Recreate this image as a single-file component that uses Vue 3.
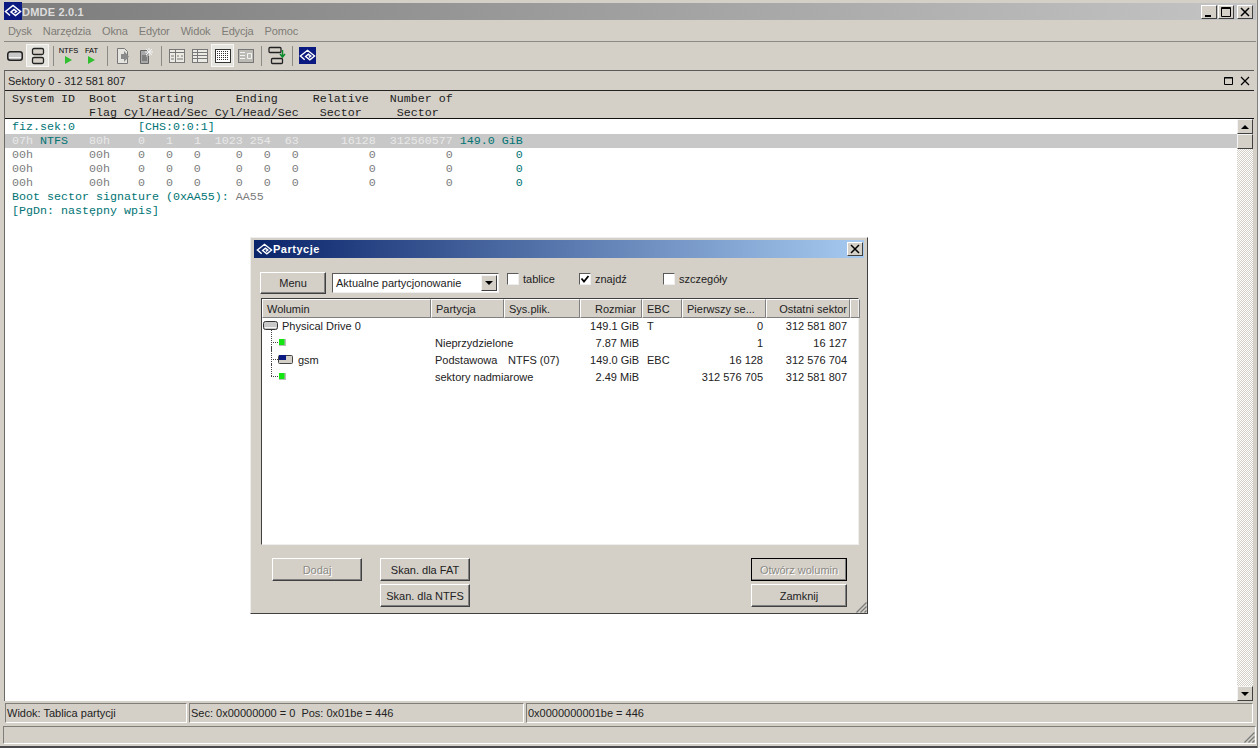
<script setup>
const menu = ['Dysk', 'Narzędzia', 'Okna', 'Edytor', 'Widok', 'Edycja', 'Pomoc']

const rows = [
  { id: 'disk', name: 'Physical Drive 0', part: '', fs: '', size: '149.1 GiB', ebc: 'T', first: '0', last: '312 581 807' },
  { id: 'free', name: '', part: 'Nieprzydzielone', fs: '', size: '7.87 MiB', ebc: '', first: '1', last: '16 127' },
  { id: 'vol', name: 'gsm', part: 'Podstawowa', fs: 'NTFS (07)', size: '149.0 GiB', ebc: 'EBC', first: '16 128', last: '312 576 704' },
  { id: 'end', name: '', part: 'sektory nadmiarowe', fs: '', size: '2.49 MiB', ebc: '', first: '312 576 705', last: '312 581 807' }
]

const emptyRows = [0, 1, 2]
</script>

<template>
  <div class="app">
    <div class="titlebar">
      <svg class="logo" viewBox="0 0 18 18">
        <rect width="18" height="18" fill="#0a1a80" />
        <path d="M6 13.500 1.500 9.500 9 3.500l7.500 6-5 4-4.500-3.500L10 7.500l2.500 2-2 1.500" fill="none" stroke="#fff" stroke-width="1.500" />
      </svg>
      <span class="app-title">DMDE 2.0.1</span>
      <div class="caption-btns">
        <button class="cap"><svg viewBox="0 0 14 12"><path d="M3 9h6v2H3z" fill="#000" /></svg></button>
        <button class="cap"><svg viewBox="0 0 14 12"><path d="M2.500 1.500h9v9h-9zM2 2.500h10" fill="none" stroke="#000" /></svg></button>
        <button class="cap cap-gap"><svg viewBox="0 0 14 12"><path d="m3 2 8 8m0-8-8 8" stroke="#000" stroke-width="1.500" /></svg></button>
      </div>
    </div>

    <div class="menubar">
      <span v-for="m in menu" :key="m" class="menu-item">{{ m }}</span>
    </div>

    <div class="toolbar">
      <span class="tool">
        <svg viewBox="0 0 16 12" width="16" height="12"><rect x=".75" y="1.750" width="14.500" height="8.500" rx="2.500" fill="#c8c8c8" stroke="#222" stroke-width="1.500" /><path d="M2 7.500h12" stroke="#f4f4f4" /></svg>
      </span>
      <span class="tool pressed">
        <svg viewBox="0 0 14 18" width="14" height="18"><rect x="1.500" y="1.500" width="11" height="6" rx="1.500" fill="#d4d0c8" stroke="#222" stroke-width="1.300" /><rect x="1.500" y="10.500" width="11" height="6" rx="1.500" fill="#d4d0c8" stroke="#222" stroke-width="1.300" /></svg>
      </span>
      <span class="sep"></span>
      <span class="tool tool-run"><b class="mini">NTFS</b><i class="play"></i></span>
      <span class="tool tool-run"><b class="mini">FAT</b><i class="play"></i></span>
      <span class="sep"></span>
      <span class="tool">
        <svg viewBox="0 0 16 18" width="16" height="18"><path d="M2.500 1.500h7l3 3v12h-10z" fill="#e6e4de" stroke="#777" /><path d="M6 7h3V4l5 5.500L9 15v-3H6z" fill="#8a8a8a" /></svg>
      </span>
      <span class="tool">
        <svg viewBox="0 0 16 18" width="16" height="18"><path d="M2.500 3.500h8v13h-8z" fill="#a8a8a8" stroke="#666" /><path d="M11 1v8M7 5h8M8 2l6 6M14 2 8 8" stroke="#f4f4f4" /><path d="M4 9h4M4 11h5M4 13h5" stroke="#555" /></svg>
      </span>
      <span class="sep"></span>
      <span class="tool">
        <svg viewBox="0 0 16 14" width="16" height="14"><rect x=".5" y=".5" width="15" height="13" fill="#eceae4" stroke="#777" /><path d="M1 3.500h14M6.500 1v12M2 7h3M2 10h3M8 7h2M12 7h2M8 10h6" stroke="#777" /></svg>
      </span>
      <span class="tool">
        <svg viewBox="0 0 16 14" width="16" height="14"><rect x=".5" y=".5" width="15" height="13" fill="#eceae4" stroke="#777" /><path d="M1 3.500h14M1 6.500h14M1 9.500h14M5.500 1v12" stroke="#777" /></svg>
      </span>
      <span class="tool pressed">
        <svg viewBox="0 0 16 14" width="16" height="14"><rect x=".5" y=".5" width="15" height="13" fill="#fff" stroke="#333" /><path d="M2 2.500h12M2 4.500h12M2 6.500h12M2 8.500h12M2 10.500h12" stroke="#333" stroke-dasharray="1 1" /></svg>
      </span>
      <span class="tool">
        <svg viewBox="0 0 16 14" width="16" height="14"><rect x=".5" y=".5" width="15" height="13" fill="#bcbab4" stroke="#777" /><path d="M2 3.500h5M2 6.500h5M2 9.500h5" stroke="#f4f4f4" /><path d="M9.500 4.500h4v5h-4z" fill="none" stroke="#f4f4f4" /></svg>
      </span>
      <span class="sep"></span>
      <span class="tool">
        <svg viewBox="0 0 18 20" width="18" height="20"><rect x="1" y="1.500" width="12" height="5" rx="1" fill="#d4d0c8" stroke="#222" stroke-width="1.300" /><rect x="3.500" y="12.500" width="11" height="5" rx="1" fill="#d4d0c8" stroke="#222" stroke-width="1.300" /><path d="M14.500 4v6M12 8l2.500 3L17 8" fill="none" stroke="#0a8a2a" stroke-width="1.500" /></svg>
      </span>
      <span class="sep"></span>
      <span class="tool">
        <svg viewBox="0 0 18 18" width="17" height="17">
          <rect width="18" height="18" fill="#0a1a80" />
          <path d="M6 13.500 1.500 9.500 9 3.500l7.500 6-5 4-4.500-3.500L10 7.500l2.500 2-2 1.500" fill="none" stroke="#fff" stroke-width="1.500" />
        </svg>
      </span>
    </div>

    <div class="panel">
      <div class="panel-head">
        <span>Sektory 0 - 312 581 807</span>
        <div class="panel-btns">
          <svg viewBox="0 0 10 10" width="10" height="10"><path d="M.5 1.500h8v7h-8zM0 2h9" fill="none" stroke="#000" /></svg>
          <svg viewBox="0 0 10 10" width="10" height="10"><path d="m1 1 8 8m0-8-8 8" stroke="#000" stroke-width="1.200" /></svg>
        </div>
      </div>
      <pre class="sector-head">System ID  Boot   Starting      Ending     Relative   Number of
           Flag Cyl/Head/Sec Cyl/Head/Sec   Sector     Sector</pre>
      <div class="sector-body">
        <div class="sector-text">
          <pre class="line teal">fiz.sek:0         [CHS:0:0:1]</pre>
          <pre class="line active">07h <span class="teal">NTFS</span>   80h    0   1   1  1023 254  63      16128  312560577 <span class="teal">149.0 GiB</span></pre>
          <pre v-for="n in emptyRows" :key="n" class="line muted">00h        00h    0   0   0     0   0   0          0          0         <span class="teal">0</span></pre>
          <pre class="line teal">Boot sector signature (0xAA55): <span class="muted">AA55</span></pre>
          <pre class="line teal">[PgDn: następny wpis]</pre>
        </div>
        <div class="scroll">
          <button class="scroll-btn"><i class="arrow up"></i></button>
          <button class="scroll-thumb"></button>
          <div class="scroll-track"></div>
          <button class="scroll-btn"><i class="arrow down"></i></button>
        </div>
      </div>
    </div>

    <div class="statusbar">
      <span class="cell c1">Widok: Tablica partycji</span>
      <span class="cell c2">Sec: 0x00000000 = 0&nbsp; Pos: 0x01be = 446</span>
      <span class="cell c3">0x0000000001be = 446</span>
    </div>
    <div class="footbar">
      <svg class="grip" viewBox="0 0 12 12" width="12" height="12"><path d="M11.500 1.500l-10 10M11.500 5.500l-6 6M11.500 9.500l-2 2" stroke="#7a7a7a" stroke-width="1.300" /></svg>
    </div>

    <div class="dialog">
      <div class="dlg-title">
        <svg viewBox="0 0 18 18" width="17" height="17">
          <path d="M6 13.500 1.500 9.500 9 3.500l7.500 6-5 4-4.500-3.500L10 7.500l2.500 2-2 1.500" fill="none" stroke="#fff" stroke-width="1.500" />
        </svg>
        <span class="dlg-name">Partycje</span>
        <button class="cap dlg-close"><svg viewBox="0 0 14 12"><path d="m3 2 8 8m0-8-8 8" stroke="#000" stroke-width="1.500" /></svg></button>
      </div>

      <div class="dlg-controls">
        <button class="btn menu-btn">Menu</button>
        <div class="combo">
          <span>Aktualne partycjonowanie</span>
          <button class="combo-btn"><i class="arrow down small"></i></button>
        </div>
        <label class="check c-tablice"><i class="box"></i>tablice</label>
        <label class="check c-znajdz">
          <i class="box"><svg viewBox="0 0 10 10" width="10" height="10"><path d="m1.500 4.500 2.500 3L8.500 2" fill="none" stroke="#000" stroke-width="1.800" /></svg></i>znajdź
        </label>
        <label class="check c-szczegoly"><i class="box"></i>szczegóły</label>
      </div>

      <div class="list">
        <div class="list-head">
          <span class="col">Wolumin</span>
          <span class="col">Partycja</span>
          <span class="col">Sys.plik.</span>
          <span class="col h-size">Rozmiar</span>
          <span class="col">EBC</span>
          <span class="col">Pierwszy se...</span>
          <span class="col h-last">Ostatni sektor</span>
          <span class="col"></span>
        </div>
        <div class="list-body">
          <div v-for="r in rows" :key="r.id" class="row" :class="'row-' + r.id">
            <span class="cell-name">
              <svg v-if="r.id === 'disk'" class="ico-disk" viewBox="0 0 15 10" width="15" height="10"><rect x=".5" y=".5" width="14" height="8" rx="2" fill="#c8c8c8" stroke="#333" /><path d="M2 6.500h11" stroke="#f4f4f4" /></svg>
              <template v-else>
                <i class="tree" :class="{ last: r.id === 'end' }"></i>
                <svg v-if="r.id === 'vol'" class="ico-vol" viewBox="0 0 15 10" width="15" height="10"><rect x=".5" y=".5" width="14" height="8" rx="1" fill="#d4d0c8" stroke="#444" /><rect x="1" y="0" width="7" height="5" fill="#0a1a80" /></svg>
                <svg v-else class="ico-free" viewBox="0 0 7 7" width="7" height="7"><rect width="7" height="7" fill="#bbb" /><rect width="5.500" height="6" fill="#14e614" /></svg>
              </template>
              <span class="name">{{ r.name }}</span>
            </span>
            <span class="cell-part">{{ r.part }}</span>
            <span class="cell-fs">{{ r.fs }}</span>
            <span class="cell-size">{{ r.size }}</span>
            <span class="cell-ebc">{{ r.ebc }}</span>
            <span class="cell-first">{{ r.first }}</span>
            <span class="cell-last">{{ r.last }}</span>
          </div>
        </div>
      </div>

      <div class="dlg-actions">
        <button class="btn wide disabled">Dodaj</button>
        <div class="stack">
          <button class="btn wide">Skan. dla FAT</button>
          <button class="btn wide">Skan. dla NTFS</button>
        </div>
        <div class="stack right">
          <button class="btn open disabled default">Otwórz wolumin</button>
          <button class="btn open">Zamknij</button>
        </div>
      </div>
      <svg class="grip" viewBox="0 0 12 12" width="12" height="12"><path d="M11.500 1.500l-10 10M11.500 5.500l-6 6M11.500 9.500l-2 2" stroke="#7a7a7a" stroke-width="1.300" /></svg>
    </div>
  </div>
</template>

<style scoped>
.app {
  position: relative;
  width: 1260px;
  height: 748px;
  box-sizing: border-box;
  padding: 3px 6px 4px 4px;
  background: #d4d0c8;
  box-shadow: inset -2px 0 0 #efefef, inset -3px 0 0 #808080, inset 0 -2px 0 #4a4a4a;
  font: 11px "Liberation Sans", sans-serif;
  color: #222;
  display: flex;
  flex-direction: column;
  overflow: hidden;
}
button {
  padding: 0;
  font: inherit;
  color: inherit;
}
i {
  display: block;
}
pre {
  margin: 0;
  font: inherit;
}
.titlebar {
  height: 17px;
  margin-right: -2px;
  flex: none;
  display: flex;
  align-items: center;
  background: linear-gradient(90deg, #7c7c7c, #c4c4c4);
}
.logo {
  width: 18px;
  height: 18px;
  margin-top: -1px;
}
.app-title {
  color: #ddd;
  font-weight: 700;
  letter-spacing: .2px;
}
.caption-btns {
  margin-left: auto;
  margin-right: 3px;
  display: flex;
  gap: 1px;
}
.cap {
  width: 16px;
  height: 14px;
  background: #d4d0c8;
  border: 1px solid;
  border-color: #fff #404040 #404040 #fff;
  display: flex;
  align-items: center;
  justify-content: center;
}
.cap svg {
  width: 14px;
  height: 12px;
}
.cap-gap {
  margin-left: 2px;
}
.menubar {
  height: 21px;
  margin-right: -2px;
  flex: none;
  display: flex;
  align-items: center;
  padding-left: 4px;
  gap: 11px;
  letter-spacing: -.15px;
  color: #7e7c76;
  border-bottom: 1px solid #8c8a84;
}
.toolbar {
  height: 27px;
  flex: none;
  display: flex;
  align-items: center;
  margin-left: -1px;
}
.tool {
  width: 23px;
  height: 23px;
  flex: none;
  display: flex;
  align-items: center;
  justify-content: center;
  box-sizing: border-box;
}
.tool.pressed {
  background: #e6e4de;
  border: 1px solid #f6f6f4;
}
.tool-run {
  flex-direction: column;
}
.mini {
  font: 400 7.500px/8px "Liberation Sans", sans-serif;
  color: #000;
}
.play {
  width: 0;
  height: 0;
  margin-top: 1px;
  border-left: 7px solid #2fbf2f;
  border-top: 4px solid transparent;
  border-bottom: 4px solid transparent;
}
.sep {
  width: 8px;
  height: 20px;
  flex: none;
  background: linear-gradient(#8c8a84, #8c8a84) center/1px 100% no-repeat;
}
.panel {
  flex: 1;
  min-height: 0;
  margin-top: 1px;
  display: flex;
  flex-direction: column;
  border-left: 1px solid #6c6a66;
  border-top: 1px solid #5a5a5a;
}
.panel-head {
  height: 19px;
  flex: none;
  display: flex;
  align-items: center;
  justify-content: space-between;
  padding: 0 4px 0 3px;
  background: #d4d0c8;
  border-bottom: 1px solid #222;
}
.panel-btns {
  display: flex;
  gap: 6px;
}
.sector-head,
.sector-text {
  font: 11.670px/14px "Liberation Mono", monospace;
}
.sector-head {
  height: 28px;
  flex: none;
  padding: 1px 0 0 7px;
  box-sizing: border-box;
  border-bottom: 1px solid #111;
  color: #222;
}
.sector-body {
  flex: 1;
  min-height: 0;
  display: flex;
  background: #fff;
  margin-right: 1px;
}
.sector-text {
  flex: 1;
  padding-top: 1px;
}
.line {
  padding-left: 7px;
}
.teal {
  color: #007474;
}
.muted {
  color: #7c7c7c;
}
.active {
  background: #c8c8c8;
  color: #e8e8e8;
}
.scroll {
  width: 16px;
  display: flex;
  flex-direction: column;
}
.scroll-btn,
.scroll-thumb {
  width: 16px;
  height: 15px;
  flex: none;
  background: #d4d0c8;
  border: 1px solid;
  border-color: #f4f4f4 #404040 #404040 #f4f4f4;
  display: flex;
  align-items: center;
  justify-content: center;
}
.scroll-track {
  flex: 1;
  background: repeating-conic-gradient(#d4d0c8 0 25%, #fff 0 50%) 0 0/2px 2px;
}
.arrow {
  width: 0;
  height: 0;
  border-left: 4px solid transparent;
  border-right: 4px solid transparent;
}
.arrow.up {
  border-bottom: 4px solid #000;
}
.arrow.down {
  border-top: 4px solid #000;
}
.statusbar {
  height: 20px;
  margin: 2px 1px 0 1px;
  flex: none;
  display: flex;
  gap: 2px;
}
.cell {
  box-sizing: border-box;
  display: flex;
  align-items: center;
  padding-left: 1px;
  border: 1px solid;
  border-color: #807e78 #fff #fff #807e78;
}
.c1 {
  width: 182px;
}
.c2 {
  width: 335px;
}
.c3 {
  flex: 1;
}
.footbar {
  position: relative;
  height: 18px;
  margin: 3px -2px 0 -1px;
  flex: none;
  box-sizing: border-box;
  border: 1px solid;
  border-color: #807e78 #fff #fff #807e78;
}
.grip {
  position: absolute;
  right: 0;
  bottom: 0;
}
.dialog {
  position: absolute;
  left: 250px;
  top: 237px;
  width: 618px;
  height: 377px;
  box-sizing: border-box;
  padding: 2px 3px 3px;
  background: #d4d0c8;
  border: 1px solid;
  border-color: #eee #404040 #404040 #eee;
  display: flex;
  flex-direction: column;
}
.dlg-title {
  height: 18px;
  flex: none;
  padding-left: 2px;
  display: flex;
  align-items: center;
  background: linear-gradient(90deg, #0a246a, #a6caf0);
  color: #fff;
  font-weight: 700;
}
.dlg-name {
  letter-spacing: .5px;
}
.dlg-close {
  margin-left: auto;
  margin-right: 1px;
}
.dlg-controls {
  height: 40px;
  flex: none;
  display: flex;
  align-items: flex-start;
  padding: 14px 0 0 6px;
  box-sizing: border-box;
}
.btn {
  height: 23px;
  background: #d4d0c8;
  border: 1px solid;
  border-color: #fff #404040 #404040 #fff;
  box-shadow: inset -1px -1px 0 #808080;
  box-sizing: border-box;
}
.menu-btn {
  width: 66px;
  height: 22px;
}
.combo {
  width: 167px;
  height: 20px;
  margin: 1px 8px 0 6px;
  display: flex;
  align-items: center;
  justify-content: space-between;
  box-sizing: border-box;
  padding-left: 3px;
  background: #fff;
  border: 1px solid;
  border-color: #5a5a5a #eee #eee #5a5a5a;
}
.combo-btn {
  width: 16px;
  height: 16px;
  margin-right: 1px;
  background: #d4d0c8;
  border: 1px solid;
  border-color: #f4f4f4 #404040 #404040 #f4f4f4;
  display: flex;
  align-items: center;
  justify-content: center;
}
.check {
  height: 14px;
  display: flex;
  align-items: center;
  gap: 4px;
}
.box {
  width: 12px;
  height: 12px;
  box-sizing: border-box;
  background: #fff;
  border: 1px solid;
  border-color: #5a5a5a #eee #eee #5a5a5a;
  display: flex;
}
.c-tablice {
  width: 72px;
}
.c-znajdz {
  width: 84px;
}
.list {
  height: 247px;
  flex: none;
  margin: 0 5px 0 7px;
  box-sizing: border-box;
  background: #fff;
  border: 1px solid;
  border-color: #404040 #eee #eee #404040;
}
.list-head {
  height: 18px;
  display: grid;
  grid-template-columns: 169px 73px 76px 62px 40px 84px 84px 1fr;
  background: #d4d0c8;
}
.col {
  box-sizing: border-box;
  padding: 1px 4px 0;
  line-height: 16px;
  white-space: nowrap;
  border: 1px solid;
  border-color: #fff #808080 #808080 #fff;
}
.h-size {
  padding-right: 5px;
  text-align: right;
}
.h-last {
  padding-right: 2px;
  text-align: right;
}
.row {
  height: 17px;
  display: grid;
  grid-template-columns: 169px 73px 76px 62px 40px 84px 84px;
  align-items: center;
  white-space: nowrap;
}
.cell-name {
  position: relative;
  display: flex;
  align-items: center;
  height: 17px;
  padding-left: 16px;
}
.ico-disk {
  margin-left: -15px;
  margin-right: 4px;
}
.tree::before {
  content: "";
  position: absolute;
  left: 9px;
  top: -4px;
  height: 21px;
  border-left: 1px dotted #444;
}
.tree.last::before {
  height: 12px;
}
.tree::after {
  content: "";
  position: absolute;
  left: 9px;
  top: 8px;
  width: 7px;
  border-top: 1px dotted #444;
}
.ico-free {
  margin-left: 1px;
}
.name {
  margin-left: 5px;
}
.row-disk .name {
  margin-left: 0;
}
.cell-part,
.cell-fs {
  padding-left: 4px;
}
.cell-size,
.cell-first,
.cell-last {
  text-align: right;
  padding-right: 3px;
}
.cell-ebc {
  padding-left: 5px;
}
.dlg-actions {
  flex: 1;
  display: flex;
  padding: 13px 6px 0 18px;
  gap: 18px;
}
.stack {
  display: flex;
  flex-direction: column;
  gap: 3px;
}
.wide {
  width: 90px;
}
.right {
  margin-left: auto;
  margin-right: 11px;
}
.open {
  width: 96px;
}
.disabled {
  color: #8c8a84;
  text-shadow: 1px 1px 0 #fff;
}
.default {
  outline: 1px solid #000;
  outline-offset: -1px;
}
</style>

<style>
html,
body {
  margin: 0;
  overflow: hidden;
  background: #d4d0c8;
}
</style>
